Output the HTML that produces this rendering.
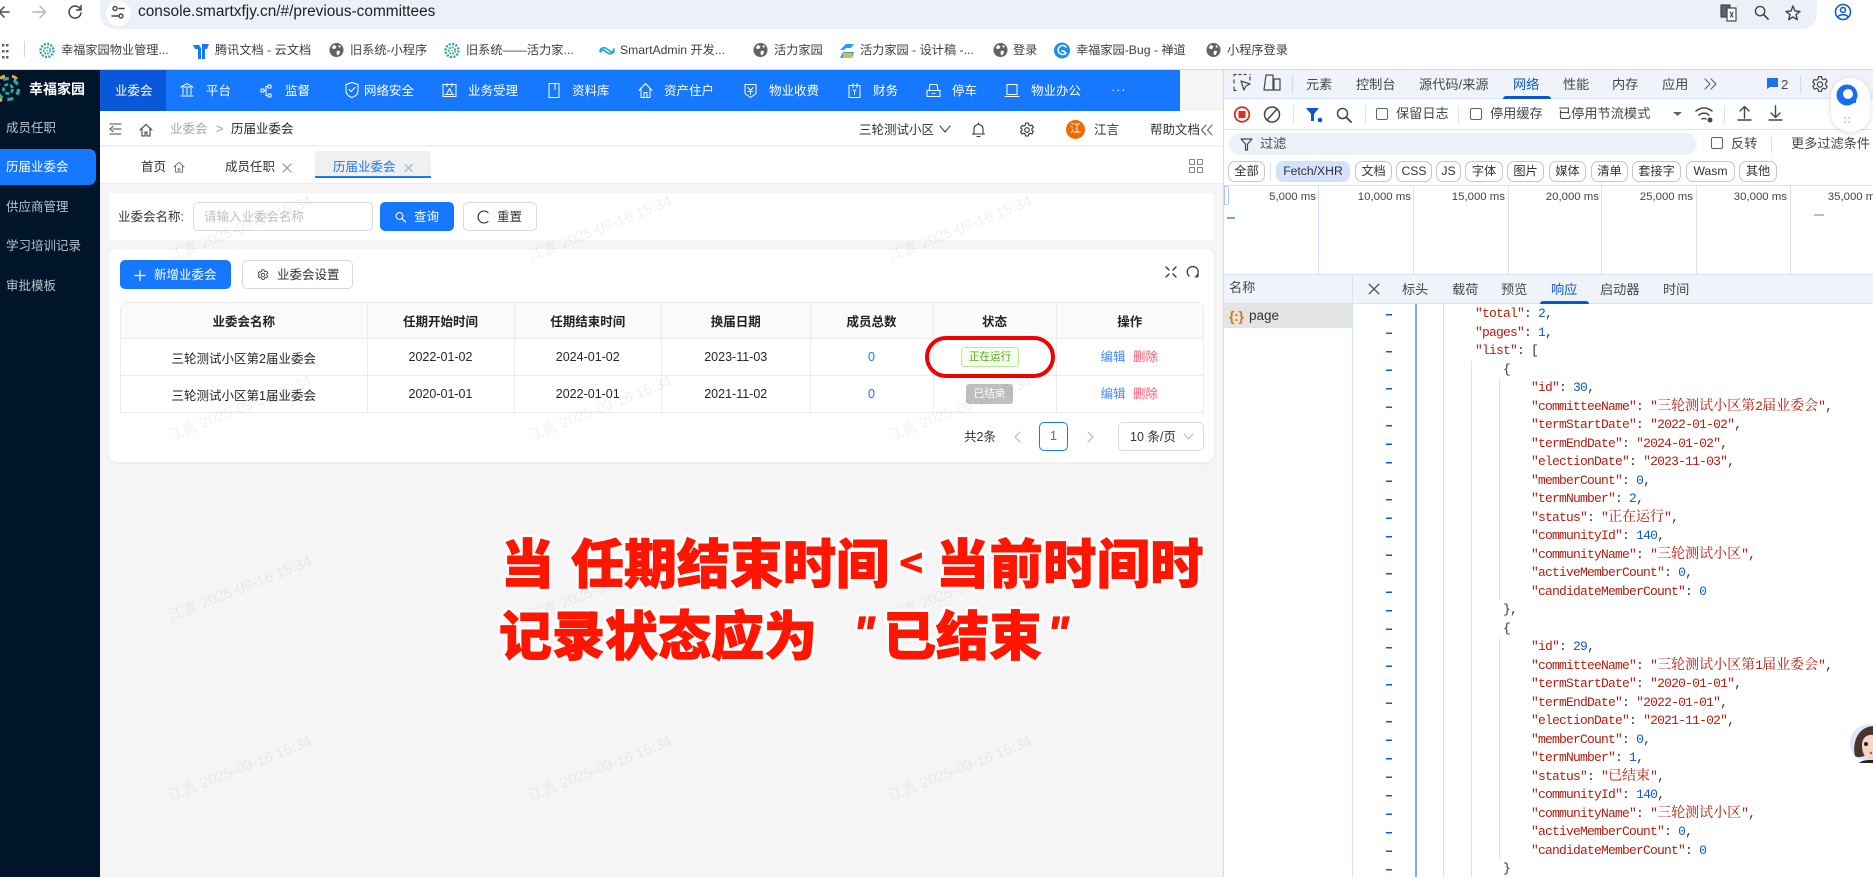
<!DOCTYPE html>
<html lang="zh-CN">
<head>
<meta charset="utf-8">
<title>历届业委会</title>
<style>
html,body{margin:0;padding:0}
body{position:relative;width:1873px;height:877px;overflow:hidden;background:#fff;font-family:"Liberation Sans","Noto Sans CJK SC",sans-serif;font-size:12.5px;color:#262626}
.b{position:absolute;box-sizing:border-box}
.t{position:absolute;white-space:nowrap;line-height:20px;height:20px}
.bm{font-size:12.2px;color:#3c4043}
.nv{color:#fff;font-size:12.5px}
.sd{color:#b9c2cc;font-size:12.5px;left:6px}
.dt{font-size:13.2px;color:#474747}
.c{position:absolute;top:161px;height:21px;box-sizing:border-box;border:1px solid #c4c7c5;border-radius:7px;text-align:center;line-height:19px;font-size:12.2px;color:#333;white-space:nowrap}
.tm{font-size:11.4px;color:#444;top:187px;text-align:right;width:70px}
.g{position:absolute;width:1px;background:#d3e3fd}
table{border-collapse:collapse;table-layout:fixed;width:1083px;position:absolute;left:0;top:0}
td,th{border:1px solid #ececec;text-align:center;padding:0;font-size:12.5px;color:#262626}
th{background:#fafafa;font-weight:700;color:#222}
pre{position:absolute;left:1475px;top:305px;margin:0;font:13px/18.5px "Liberation Mono",monospace;letter-spacing:-.8px;color:#333}
pre em{font-style:normal;color:#b71c0e}
pre var{font-style:normal;color:#0b57d0}
pre cite{font:14px/0 "Noto Serif CJK SC",serif;letter-spacing:0}
.an{position:absolute;white-space:nowrap;font-family:"Noto Sans CJK SC",sans-serif;font-weight:900;font-size:53px;line-height:60px;color:#ff1500;-webkit-text-stroke:1px #ff1500;text-shadow:3px 0 0 #fff,-3px 0 0 #fff,0 3px 0 #fff,0 -3px 0 #fff,2px 2px 0 #fff,-2px 2px 0 #fff,2px -2px 0 #fff,-2px -2px 0 #fff,3px 2px 0 #fff,-3px 2px 0 #fff,3px -2px 0 #fff,-3px -2px 0 #fff,2px 3px 0 #fff,-2px 3px 0 #fff,2px -3px 0 #fff,-2px -3px 0 #fff}
</style>
</head>
<body>
<!-- browser chrome -->
<div class="b" style="left:100px;top:0;width:1717px;height:29px;background:#ebf0f9;border-radius:0 0 15px 15px"></div>
<div class="b" style="left:106px;top:1px;width:25px;height:25px;background:#fff;border-radius:50%"></div>
<div class="t" style="left:138px;top:2px;font-size:15.4px;color:#1f1f1f">console.smartxfjy.cn/#/previous-committees</div>
<div class="b" style="left:0;top:69px;width:1873px;height:1px;background:#d9d9d9"></div>
<div class="b" style="left:24px;top:41px;width:1px;height:16px;background:#c7d7f0"></div>
<div class="t bm" style="left:61px;top:40px">幸福家园物业管理...</div>
<div class="t bm" style="left:215px;top:40px">腾讯文档 - 云文档</div>
<div class="t bm" style="left:350px;top:40px">旧系统-小程序</div>
<div class="t bm" style="left:466px;top:40px">旧系统——活力家...</div>
<div class="t bm" style="left:620px;top:40px">SmartAdmin 开发...</div>
<div class="t bm" style="left:774px;top:40px">活力家园</div>
<div class="t bm" style="left:860px;top:40px">活力家园 - 设计稿 -...</div>
<div class="t bm" style="left:1013px;top:40px">登录</div>
<div class="t bm" style="left:1076px;top:40px">幸福家园-Bug - 禅道</div>
<div class="t bm" style="left:1227px;top:40px">小程序登录</div>

<!-- sidebar -->
<div class="b" style="left:0;top:70px;width:100px;height:807px;background:#001529"></div>
<div class="t" style="left:29px;top:79px;color:#fff;font-weight:700;font-size:14px">幸福家园</div>
<div class="b" style="left:0;top:149px;width:96px;height:36px;background:#1677ff;border-radius:0 7px 7px 0"></div>
<div class="t sd" style="top:118px">成员任职</div>
<div class="t sd" style="top:157px;color:#fff">历届业委会</div>
<div class="t sd" style="top:197px">供应商管理</div>
<div class="t sd" style="top:236px">学习培训记录</div>
<div class="t sd" style="top:276px">审批模板</div>

<!-- top nav -->
<div class="b" style="left:100px;top:70px;width:1080px;height:41px;background:#1677ff"></div>
<div class="b" style="left:100px;top:70px;width:66px;height:41px;background:#0958d9"></div>
<div class="t nv" style="left:115px;top:81px">业委会</div>
<div class="t nv" style="left:206px;top:81px">平台</div>
<div class="t nv" style="left:285px;top:81px">监督</div>
<div class="t nv" style="left:364px;top:81px">网络安全</div>
<div class="t nv" style="left:468px;top:81px">业务受理</div>
<div class="t nv" style="left:572px;top:81px">资料库</div>
<div class="t nv" style="left:664px;top:81px">资产住户</div>
<div class="t nv" style="left:769px;top:81px">物业收费</div>
<div class="t nv" style="left:873px;top:81px">财务</div>
<div class="t nv" style="left:952px;top:81px">停车</div>
<div class="t nv" style="left:1031px;top:81px">物业办公</div>
<div class="t nv" style="left:1111px;top:80px;letter-spacing:1px">···</div>

<!-- page area -->
<div class="b" style="left:100px;top:111px;width:1123px;height:766px;background:#f5f5f5"></div>
<div class="b" style="left:1180px;top:70px;width:43px;height:41px;background:#f5f5f5"></div>
<div class="b" style="left:100px;top:111px;width:1123px;height:35px;background:#fff;border-bottom:1px solid #f0f0f0"></div>
<div class="b" style="left:100px;top:147px;width:1123px;height:37px;background:#fff;border-bottom:1px solid #ececec"></div>
<div class="t" style="left:170px;top:119px;color:#a6a6a6">业委会</div>
<div class="t" style="left:216px;top:119px;color:#999">&gt;</div>
<div class="t" style="left:231px;top:119px;color:#262626">历届业委会</div>
<div class="t" style="left:859px;top:120px;color:#333">三轮测试小区</div>
<div class="b" style="left:1066px;top:120px;width:19px;height:19px;border-radius:50%;background:#f56a00;color:#fff;font-size:11px;line-height:19px;text-align:center">江</div>
<div class="t" style="left:1094px;top:120px;color:#333">江言</div>
<div class="t" style="left:1150px;top:120px;color:#333">帮助文档</div>
<div class="b" style="left:315px;top:151px;width:116px;height:27px;background:#f0f0f0;border-radius:4px 4px 0 0;border-bottom:2px solid #1677ff"></div>
<div class="t" style="left:141px;top:157px;color:#333">首页</div>
<div class="t" style="left:225px;top:157px;color:#333">成员任职</div>
<div class="t" style="left:333px;top:157px;color:#1677ff">历届业委会</div>

<div class="b" style="left:109px;top:193px;width:1105px;height:47px;background:#fff"></div>
<div class="t" style="left:118px;top:207px;color:#333">业委会名称:</div>
<div class="b" style="left:193px;top:202px;width:180px;height:29px;background:#fff;border:1px solid #d9d9d9;border-radius:5px"></div>
<div class="t" style="left:204px;top:207px;color:#bfbfbf">请输入业委会名称</div>
<div class="b" style="left:380px;top:202px;width:74px;height:29px;background:#1677ff;border-radius:5px"></div>
<div class="t" style="left:414px;top:207px;color:#fff">查询</div>
<div class="b" style="left:463px;top:202px;width:74px;height:29px;background:#fff;border:1px solid #d9d9d9;border-radius:5px"></div>
<div class="t" style="left:497px;top:207px;color:#333">重置</div>

<div class="b" style="left:109px;top:249px;width:1105px;height:213px;background:#fff;border-radius:8px;box-shadow:0 1px 3px rgba(0,0,0,.05)"></div>
<div class="b" style="left:120px;top:260px;width:111px;height:29px;background:#1677ff;border-radius:5px"></div>
<div class="t" style="left:154px;top:265px;color:#fff">新增业委会</div>
<div class="b" style="left:242px;top:260px;width:111px;height:29px;background:#fff;border:1px solid #d9d9d9;border-radius:5px"></div>
<div class="t" style="left:277px;top:265px;color:#333">业委会设置</div>

<div class="b" style="left:120px;top:302px;width:1083.5px;height:112px;overflow:hidden;border-radius:7px 7px 0 0">
<table>
<colgroup><col style="width:246.5px"><col style="width:147px"><col style="width:147.5px"><col style="width:148.5px"><col style="width:123px"><col style="width:123px"><col style="width:147.5px"></colgroup>
<tr style="height:36px"><th>业委会名称</th><th>任期开始时间</th><th>任期结束时间</th><th>换届日期</th><th>成员总数</th><th>状态</th><th>操作</th></tr>
<tr style="height:37px"><td>三轮测试小区第2届业委会</td><td>2022-01-02</td><td>2024-01-02</td><td>2023-11-03</td><td style="color:#1677ff">0</td><td></td><td></td></tr>
<tr style="height:37px"><td>三轮测试小区第1届业委会</td><td>2020-01-01</td><td>2022-01-01</td><td>2021-11-02</td><td style="color:#1677ff">0</td><td></td><td></td></tr>
</table>
</div>
<div class="b" style="left:961px;top:347px;width:58px;height:20px;background:#f6ffed;border:1px solid #b7eb8f;border-radius:3px;color:#52a91a;font-size:10.6px;line-height:18px;text-align:center">正在运行</div>
<div class="b" style="left:966px;top:384px;width:47px;height:20px;background:#bfbfbf;border-radius:3px;color:#fff;font-size:10.6px;line-height:20px;text-align:center">已结束</div>
<div class="b" style="left:925px;top:336px;width:130px;height:42px;border:4px solid #f00000;border-radius:21px"></div>
<div class="t" style="left:1100.5px;top:347px;color:#3f8cff">编辑</div>
<div class="t" style="left:1133px;top:347px;color:#ff5a70">删除</div>
<div class="t" style="left:1100.5px;top:384px;color:#3f8cff">编辑</div>
<div class="t" style="left:1133px;top:384px;color:#ff5a70">删除</div>
<div class="t" style="left:964px;top:427px;color:#333">共2条</div>
<div class="b" style="left:1039px;top:422px;width:29px;height:29px;border:1px solid #1677ff;border-radius:5px;background:#fff;color:#1677ff;text-align:center;line-height:27px">1</div>
<div class="b" style="left:1118px;top:422px;width:85.5px;height:29px;border:1px solid #d9d9d9;border-radius:5px;background:#fff"></div>
<div class="t" style="left:1130px;top:427px;color:#333">10 条/页</div>

<!-- devtools -->
<div class="b" style="left:1223px;top:70px;width:650px;height:807px;background:#fff;border-left:1px solid #cfdcf2"></div>
<div class="b" style="left:1224px;top:70px;width:649px;height:29px;background:#f0f4fa;border-bottom:1px solid #d3e3fd"></div>
<div class="b" style="left:1503px;top:96px;width:48px;height:3px;background:#0b57d0;border-radius:3px 3px 0 0"></div>
<div class="t dt" style="left:1306px;top:75px">元素</div>
<div class="t dt" style="left:1356px;top:75px">控制台</div>
<div class="t dt" style="left:1419px;top:75px">源代码/来源</div>
<div class="t dt" style="left:1513px;top:75px;color:#0b57d0">网络</div>
<div class="t dt" style="left:1563px;top:75px">性能</div>
<div class="t dt" style="left:1612px;top:75px">内存</div>
<div class="t dt" style="left:1662px;top:75px">应用</div>
<div class="t dt" style="left:1781px;top:75px">2</div>
<div class="b" style="left:1224px;top:129px;width:649px;height:1px;background:#d3e3fd"></div>
<div class="t dt" style="left:1396px;top:104px">保留日志</div>
<div class="t dt" style="left:1490px;top:104px">停用缓存</div>
<div class="t dt" style="left:1558px;top:104px">已停用节流模式</div>
<div class="b" style="left:1376px;top:108px;width:12px;height:12px;border:1px solid #5f6368;border-radius:2px"></div>
<div class="b" style="left:1470px;top:108px;width:12px;height:12px;border:1px solid #5f6368;border-radius:2px"></div>
<div class="b" style="left:1229px;top:133px;width:468px;height:22px;border-radius:11px;background:#edf2fa"></div>
<div class="t dt" style="left:1260px;top:134px">过滤</div>
<div class="b" style="left:1711px;top:137px;width:12px;height:12px;border:1px solid #5f6368;border-radius:2px"></div>
<div class="t dt" style="left:1731px;top:134px">反转</div>
<div class="t dt" style="left:1791px;top:134px">更多过滤条件</div>
<div class="c" style="left:1228px;width:37px">全部</div>
<div class="c" style="left:1276px;width:74px;background:#d3e3fd;border-color:#d3e3fd">Fetch/XHR</div>
<div class="c" style="left:1355px;width:37px">文档</div>
<div class="c" style="left:1396px;width:36px">CSS</div>
<div class="c" style="left:1436px;width:25px">JS</div>
<div class="c" style="left:1465px;width:38px">字体</div>
<div class="c" style="left:1507px;width:37px">图片</div>
<div class="c" style="left:1549px;width:37px">媒体</div>
<div class="c" style="left:1591px;width:37px">清单</div>
<div class="c" style="left:1632px;width:49px">套接字</div>
<div class="c" style="left:1686px;width:49px">Wasm</div>
<div class="c" style="left:1739px;width:38px">其他</div>
<div class="b" style="left:1224px;top:185px;width:649px;height:1px;background:#d3e3fd"></div>
<div class="b" style="left:1224px;top:274px;width:649px;height:1px;background:#d3e3fd"></div>
<div class="g" style="left:1318px;top:186px;height:88px"></div>
<div class="g" style="left:1413px;top:186px;height:88px"></div>
<div class="g" style="left:1508px;top:186px;height:88px"></div>
<div class="g" style="left:1601px;top:186px;height:88px"></div>
<div class="g" style="left:1696px;top:186px;height:88px"></div>
<div class="g" style="left:1790px;top:186px;height:88px"></div>
<div class="t tm" style="left:1246px">5,000 ms</div>
<div class="t tm" style="left:1341px">10,000 ms</div>
<div class="t tm" style="left:1435px">15,000 ms</div>
<div class="t tm" style="left:1529px">20,000 ms</div>
<div class="t tm" style="left:1623px">25,000 ms</div>
<div class="t tm" style="left:1717px">30,000 ms</div>
<div class="t tm" style="left:1811px">35,000 ms</div>
<div class="b" style="left:1224px;top:186px;width:5px;height:19px;background:#fff;border:1px solid #a8c7fa;border-radius:0 2px 2px 0"></div>
<div class="b" style="left:1227px;top:217px;width:8px;height:2px;background:#6ea4ee"></div>
<div class="b" style="left:1814px;top:214px;width:10px;height:2px;background:#bdbdbd"></div>

<div class="b" style="left:1224px;top:275px;width:649px;height:29px;background:#f0f4fa;border-bottom:1px solid #d3e3fd"></div>
<div class="t dt" style="left:1229px;top:278px">名称</div>
<div class="g" style="left:1352px;top:275px;height:602px"></div>
<div class="t dt" style="left:1402px;top:280px">标头</div>
<div class="t dt" style="left:1452px;top:280px">载荷</div>
<div class="t dt" style="left:1501px;top:280px">预览</div>
<div class="t dt" style="left:1551px;top:280px;color:#0b57d0">响应</div>
<div class="t dt" style="left:1600px;top:280px">启动器</div>
<div class="t dt" style="left:1663px;top:280px">时间</div>
<div class="b" style="left:1540px;top:301px;width:49px;height:3px;background:#0b57d0;border-radius:3px 3px 0 0"></div>
<div class="b" style="left:1224px;top:304px;width:128px;height:24px;background:#e3e5e3"></div>
<div class="t" style="left:1229px;top:306px;font-size:14px;font-weight:700;letter-spacing:-.3px;color:#e8710a">{:}</div>
<div class="t" style="left:1249px;top:306px;font-size:13.5px;color:#333">page</div>

<div class="g" style="left:1415px;top:304px;height:573px;width:1.5px;background:#7cabf2"></div>
<div class="g" style="left:1443px;top:304px;height:573px"></div>
<div class="g" style="left:1471px;top:361px;height:516px"></div>
<div class="g" style="left:1499px;top:378px;height:222px"></div>
<div class="g" style="left:1499px;top:638px;height:221px"></div>
<div class="b" style="left:1386px;top:313.500px;width:6px;height:560px;background:repeating-linear-gradient(#0b57d0 0 1.5px,transparent 1.5px 18.5px)"></div>
<pre>
<em>"total"</em>: <var>2</var>,
<em>"pages"</em>: <var>1</var>,
<em>"list"</em>: [
    {
        <em>"id"</em>: <var>30</var>,
        <em>"committeeName"</em>: <em>"<cite>三轮测试小区第</cite>2<cite>届业委会</cite>"</em>,
        <em>"termStartDate"</em>: <em>"2022-01-02"</em>,
        <em>"termEndDate"</em>: <em>"2024-01-02"</em>,
        <em>"electionDate"</em>: <em>"2023-11-03"</em>,
        <em>"memberCount"</em>: <var>0</var>,
        <em>"termNumber"</em>: <var>2</var>,
        <em>"status"</em>: <em>"<cite>正在运行</cite>"</em>,
        <em>"communityId"</em>: <var>140</var>,
        <em>"communityName"</em>: <em>"<cite>三轮测试小区</cite>"</em>,
        <em>"activeMemberCount"</em>: <var>0</var>,
        <em>"candidateMemberCount"</em>: <var>0</var>
    },
    {
        <em>"id"</em>: <var>29</var>,
        <em>"committeeName"</em>: <em>"<cite>三轮测试小区第</cite>1<cite>届业委会</cite>"</em>,
        <em>"termStartDate"</em>: <em>"2020-01-01"</em>,
        <em>"termEndDate"</em>: <em>"2022-01-01"</em>,
        <em>"electionDate"</em>: <em>"2021-11-02"</em>,
        <em>"memberCount"</em>: <var>0</var>,
        <em>"termNumber"</em>: <var>1</var>,
        <em>"status"</em>: <em>"<cite>已结束</cite>"</em>,
        <em>"communityId"</em>: <var>140</var>,
        <em>"communityName"</em>: <em>"<cite>三轮测试小区</cite>"</em>,
        <em>"activeMemberCount"</em>: <var>0</var>,
        <em>"candidateMemberCount"</em>: <var>0</var>
    }</pre>

<!-- icons layer -->
<svg class="b" style="left:0;top:0" width="1873" height="877" viewBox="0 0 1873 877" fill="none" stroke-linecap="round" stroke-linejoin="round">
<defs>
<symbol id="globe" viewBox="0 0 16 16"><circle cx="8" cy="8" r="7.5" fill="#5f6368"/><path d="M5 2.5 8 4 7 6.5 4.5 7 3 5.5zM9 8.5l3 1-1.5 3.5-2 .5-.5-3zM11 2.6l2 2.2-2 .8-1-2z" fill="#fff"/></symbol>
<symbol id="flower" viewBox="0 0 16 16"><circle cx="8" cy="8" r="3.2" stroke="#2aa5a5" stroke-width="1.800" stroke-dasharray="1.800 1.100" stroke-linecap="butt"/><circle cx="8" cy="8" r="6.500" stroke="#2aa5a5" stroke-width="2.400" stroke-dasharray="2 1.400" stroke-linecap="butt"/><circle cx="8" cy="8" r="1" fill="#e8a33a"/></symbol>
<symbol id="gear" viewBox="0 0 16 16"><path d="M6.6 1h2.8l.4 2 1.3.7 1.9-.7 1.4 2.4-1.5 1.3v1.6l1.5 1.3-1.4 2.4-1.9-.7-1.3.7-.4 2H6.6l-.4-2-1.3-.7-1.9.7-1.4-2.4 1.5-1.3V7.2L1.6 5.9 3 3.5l1.9.7 1.300-.7z" stroke="currentColor" stroke-width="1.100" fill="none"/><circle cx="8" cy="8" r="2.300" stroke="currentColor" stroke-width="1.100" fill="none"/></symbol>
<symbol id="close" viewBox="0 0 10 10"><path d="M1 1l8 8M9 1l-8 8" stroke="currentColor" stroke-width="1"/></symbol>
<symbol id="home" viewBox="0 0 14 14"><path d="M1 7 7 1.500 13 7M3 6v7h3V9h2v4h3V6" stroke="currentColor" stroke-width="1" fill="none"/></symbol>
<symbol id="mag" viewBox="0 0 16 16"><circle cx="6.500" cy="6.500" r="5" stroke="currentColor" stroke-width="1.500" fill="none"/><path d="M10.300 10.300 15 15" stroke="currentColor" stroke-width="1.800"/></symbol>
</defs>

<!-- browser nav -->
<g stroke="#444746" stroke-width="1.500"><path d="M9 12H0M4 7l-5 5 5 5"/></g>
<g stroke="#b4b6b8" stroke-width="1.500"><path d="M33 15h12M40 9.500 45.500 15 40 20.500" transform="translate(0 -3)"/></g>
<path d="M80.500 9.500a6 6 0 1 0 .5 3.500M81 5.500v4.500h-4.500" stroke="#444746" stroke-width="1.500"/>
<g stroke="#444746" stroke-width="1.400"><circle cx="115" cy="8.500" r="2"/><circle cx="121" cy="16" r="2"/><path d="M119 8.500h5M112 16h7"/></g>
<g fill="#5f6368"><rect x="2" y="44" width="2.500" height="2.500"/><rect x="2" y="50" width="2.500" height="2.500"/><rect x="2" y="56" width="2.500" height="2.500"/><rect x="6" y="50" width="2.500" height="2.500"/><rect x="6" y="44" width="2.500" height="2.500"/><rect x="6" y="56" width="2.500" height="2.500"/></g>
<use href="#flower" x="39" y="42" width="16" height="17"/>
<use href="#flower" x="444" y="42" width="16" height="17"/>
<path d="M193 45h6l2 3v11h-3V49h-3l-2-4zM202 44h7l-2 5h-2v10h-3z" fill="#1677ff"/>
<use href="#globe" x="329" y="42" width="15" height="16"/>
<use href="#globe" x="753" y="42" width="15" height="16"/>
<use href="#globe" x="993" y="42" width="15" height="16"/>
<use href="#globe" x="1206" y="42" width="15" height="16"/>
<path d="M600 51a4 3.500 0 0 1 7-2l4 3a4 3.500 0 0 0 3-3M614 50a4 3.500 0 0 1-7 2.500l-3.500-2.500a3 3 0 0 0-3 2" stroke="#29a8d8" stroke-width="1.700"/>
<path d="M840 50l6-6h8l-3 4h-5l-2 2zM840 58l3-6h11l-2 6z" fill="#29a0ea"/><rect x="843" y="53" width="9" height="5" fill="#f5b32a"/>
<circle cx="1062" cy="50.500" r="8" fill="#1e8fe9"/><path d="M1066 47a4.500 4.500 0 1 0 0 6l-2.500-2h-1.500" stroke="#fff" stroke-width="1.500"/>
<!-- right omni icons -->
<g stroke="#444746" stroke-width="1.200"><rect x="1721" y="5" width="9" height="12" fill="#5f6368"/><rect x="1727" y="8" width="9" height="13" fill="#fff"/><path d="M1730 12l3 5M1733 12l-2.500 5"/></g>
<use href="#mag" x="1754" y="5" width="15" height="15" color="#444746"/>
<path d="M1793 6l2 5 5 .4-4 3.300 1.300 5-4.300-2.700-4.300 2.700 1.300-5-4-3.300 5-.4z" stroke="#444746" stroke-width="1.400"/>
<g stroke="#0b57d0" stroke-width="1.500"><circle cx="1843" cy="12" r="7.500"/><circle cx="1843" cy="10" r="2.500"/><path d="M1838 17c1.500-3 8.500-3 10 0"/></g>

<!-- sidebar logo -->
<g stroke-linecap="butt">
<circle cx="8" cy="89" r="4.500" stroke="#27a7a7" stroke-width="2.600" stroke-dasharray="4 1.800"/>
<circle cx="8" cy="89" r="10.500" stroke="#27a7a7" stroke-width="3.200" stroke-dasharray="6 5"/>
<path d="M0 78.500a13 13 0 0 1 5-2.500M12 76a13 13 0 0 1 5 3M-2 97a13 13 0 0 0 4 4" stroke="#e8a33a" stroke-width="3"/>
</g>

<!-- top nav icons -->
<g stroke="#fff" stroke-width="1" transform="translate(0 3.500)">
<path d="M181 83.500 187 80l6 3.500zM183 85v6M187 85v6M191 85v6M181 92.500h12"/>
<path d="M261 85.500h3v3h-3zM268 81.500h3v3h-3zM268 90.500h3v3h-3zM264 87h2v-4h2M266 87v5h2"/>
<path d="M346 81l6-2 6 2v6c0 4-3 6-6 7-3-1-6-3-6-7zM349 86l2 2 4-4"/>
<path d="M443 81h13v12h-13zM447 80v3M452 80v3M447 90l2.500-5 2.500 5M445 91h9"/>
<path d="M549 80h10v14h-10zM555 80v6"/>
<path d="M639 87l6.500-7 6.500 7M641 85v9h9v-9M644 94v-5h3v5"/>
<path d="M745 81h11v9l-5.500 4-5.500-4zM748 84l2.500 3 2.500-3M750.500 87v4M748 88h5"/>
<path d="M849 82h11v12h-11zM853 80v4M857 80v4M853 86l1.500 2 1.500-2M854.500 88v3"/>
<path d="M927 87h13v6h-13zM929 87l1-6h7l1 6M932 90h3"/>
<path d="M1007 81h10v10h-10zM1005 93h14"/>
</g>

<!-- breadcrumb icons -->
<path d="M110 124h11M113 129h8M110 134h11M113 126.500l-3 2.500 3 2.500" stroke="#444" stroke-width="1"/>
<use href="#home" x="139" y="123" width="14" height="14" color="#333"/>
<path d="M940 126l5 6 5-6" stroke="#444" stroke-width="1.100"/>
<path d="M974 134v-5a4.500 4.500 0 0 1 9 0v5M972.500 134h12M977 136.500h3M978.500 123v1.500" stroke="#333" stroke-width="1.100"/>
<use href="#gear" x="1019" y="122" width="16" height="16" color="#333"/>
<path d="M1206 125l-4.500 5 4.500 5M1212 125l-4.500 5 4.500 5" stroke="#555" stroke-width="1"/>
<use href="#home" x="173" y="161" width="12" height="12" color="#666"/>
<use href="#close" x="282" y="163" width="10" height="10" color="#888"/>
<use href="#close" x="404" y="163" width="9" height="10" color="#6ba4f8"/>
<g stroke="#888" stroke-width="1"><rect x="1189.500" y="159.500" width="5" height="5"/><rect x="1197.500" y="159.500" width="5" height="5"/><rect x="1189.500" y="167.500" width="5" height="5"/><rect x="1197.500" y="167.500" width="5" height="5"/></g>

<!-- action icons -->
<g transform="translate(395 211)"><use href="#mag" width="11" height="12" color="#fff"/></g>
<path d="M488 212.500a6 6 0 1 0 0 9" stroke="#333" stroke-width="1.100"/>
<path d="M135 275.500h10M140 270.500v10" stroke="#fff" stroke-width="1.200"/>
<use href="#gear" x="257" y="269" width="12" height="12" color="#333"/>
<path d="M1166 267l3 3M1176 267l-3 3M1166 277l3-3M1176 277l-3-3" stroke="#333" stroke-width="1.300"/>
<path d="M1189 276a5.500 5.500 0 1 1 7.500 0" stroke="#333" stroke-width="1.200"/><path d="M1195 277l3 0 0-3" stroke="#333" stroke-width="1"/>
<path d="M1020 432l-5 5 5 5M1088 432l5 5-5 5" stroke="#b5b5b5" stroke-width="1.100"/>
<path d="M1184 434l4.500 5 4.500-5" stroke="#bbb" stroke-width="1.100"/>

<!-- devtools icons -->
<g stroke="#444746" stroke-width="1.200">
<path d="M1234 76v-1.500h2M1239 74.500h2M1244 74.500h2M1250 74.500h0M1234 80v3M1234 87v3M1234 90.500h2M1250 77v3"/>
<path d="M1241 81l9 3-4 2-2 4z"/>
<path d="M1266 75h7v15h-9zM1264 90h8M1274 79h6v11h-6z"/>
<path d="M1292.500 76v17" stroke="#cfdcf2"/>
<path d="M1705 79l5 5-5 5M1711 79l5 5-5 5" stroke="#5f6368"/>
<path d="M1800.500 76v17" stroke="#cfdcf2"/>
</g>
<path d="M1767 78h11v9h-8l-3 2z" fill="#1a73e8"/>
<use href="#gear" x="1811" y="75" width="18" height="19" color="#444746"/>
<circle cx="1242" cy="114.500" r="7.300" stroke="#d93025" stroke-width="1.800"/><rect x="1238.500" y="111" width="7" height="7" fill="#d93025"/>
<g stroke="#444746" stroke-width="1.500"><circle cx="1272" cy="114.500" r="7.500"/><path d="M1267 120l10-11"/></g>
<path d="M1293.500 106v17M1365.500 106v17M1458.500 106v17M1724.500 106v17M1771.500 137v16M1270.500 163v17" stroke="#d3e3fd" stroke-width="1"/>
<path d="M1306 108h13l-5 6v7l-3 0v-7z" fill="#0b57d0"/><circle cx="1320" cy="120" r="2.300" fill="#0b57d0"/>
<use href="#mag" x="1336" y="107" width="16" height="16" color="#444746"/>
<path d="M1673 112h9l-4.500 4z" fill="#5f6368"/>
<g stroke="#444746" stroke-width="1.500"><path d="M1696 111c5-4 11-4 16 0M1699 115c3-2.500 7-2.500 10 0M1702 119c1.500-1 2.500-1 4 0"/></g><circle cx="1710" cy="120" r="2.500" fill="#444746"/>
<g stroke="#444746" stroke-width="1.400"><path d="M1744.500 118v-11M1740 111l4.500-4.500 4.500 4.500M1738 120h13"/><path d="M1775.500 106v11M1771 113l4.500 4.500 4.500-4.500M1769 120h13"/></g>
<path d="M1241 139h11l-4.500 5v6h-2v-6z" stroke="#444746" stroke-width="1.200"/>
<use href="#close" x="1368" y="283" width="12" height="12" color="#444746"/>

<!-- floating widget -->
<rect x="1831" y="78" width="39" height="54" rx="19" fill="#fff" style="filter:drop-shadow(0 1px 3px rgba(0,0,0,.15))"/>
<circle cx="1847" cy="95" r="10.500" fill="#1a6cf0"/><circle cx="1848" cy="94" r="5" fill="#fff"/><path d="M1850 103l6-6v6z" fill="#1a6cf0"/>
<g fill="#c4c7c5"><circle cx="1845" cy="118" r="1"/><circle cx="1849" cy="118" r="1"/><circle cx="1845" cy="122" r="1"/><circle cx="1849" cy="122" r="1"/></g>

<!-- avatar -->
<circle cx="1869" cy="743" r="20" fill="#fff"/>
<circle cx="1869" cy="743" r="19" fill="#dbe7ff"/>
<path d="M1855 756c-3-14 3-29 18-30v32c-6-6-12 2-18-2z" fill="#4a332b"/>
<path d="M1862 745c0-7 5-11 11-10v26c-6 0-11-6-11-16z" fill="#f6d5c9"/>
<path d="M1859 763c4-3 8-3 14-3v3z" fill="#222"/>
<circle cx="1866" cy="744" r="2" fill="#222"/><circle cx="1871" cy="753" r="1.200" fill="#c84f4f"/>

<!-- watermark -->
<g fill="rgba(0,0,0,.06)" font-size="15" font-family="Liberation Sans, Noto Sans CJK SC, sans-serif">
<text transform="translate(171 261) rotate(-21.600)">江言 2025-09-16 15:34</text>
<text transform="translate(531 261) rotate(-21.600)">江言 2025-09-16 15:34</text>
<text transform="translate(891 261) rotate(-21.600)">江言 2025-09-16 15:34</text>
<text transform="translate(171 441) rotate(-21.600)">江言 2025-09-16 15:34</text>
<text transform="translate(531 441) rotate(-21.600)">江言 2025-09-16 15:34</text>
<text transform="translate(891 441) rotate(-21.600)">江言 2025-09-16 15:34</text>
<text transform="translate(171 621) rotate(-21.600)">江言 2025-09-16 15:34</text>
<text transform="translate(531 621) rotate(-21.600)">江言 2025-09-16 15:34</text>
<text transform="translate(891 621) rotate(-21.600)">江言 2025-09-16 15:34</text>
<text transform="translate(171 801) rotate(-21.600)">江言 2025-09-16 15:34</text>
<text transform="translate(531 801) rotate(-21.600)">江言 2025-09-16 15:34</text>
<text transform="translate(891 801) rotate(-21.600)">江言 2025-09-16 15:34</text>
</g>
</svg>

<!-- annotation -->
<div class="an" style="left:501px;top:531px">当</div>
<div class="an" style="left:571px;top:531px">任期结束时间</div>
<div class="an" style="left:899px;top:531px;font-size:40px;-webkit-text-stroke:0">&lt;</div>
<div class="an" style="left:936px;top:531px;letter-spacing:.6px">当前时间时</div>
<div class="an" style="left:499px;top:603px">记录状态应为</div>
<div class="an" style="left:853px;top:603px;font-size:46px;font-family:'Liberation Sans',sans-serif;font-style:italic;font-weight:700">"</div>
<div class="an" style="left:883px;top:603px">已结束</div>
<div class="an" style="left:1047px;top:603px;font-size:46px;font-family:'Liberation Sans',sans-serif;font-style:italic;font-weight:700">"</div>
</body>
</html>
